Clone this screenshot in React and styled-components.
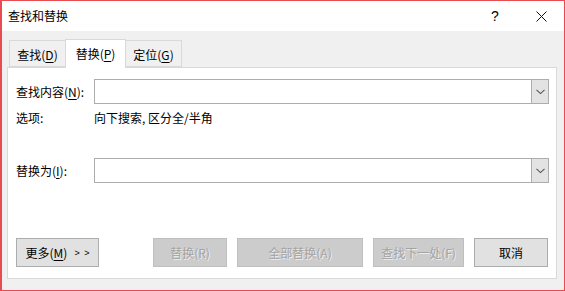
import React from "react";
import styled, { createGlobalStyle } from "styled-components";

const GlobalStyle = createGlobalStyle`
  html, body {
    margin: 0;
    padding: 0;
    background: #f0f0f0;
  }
  * {
    box-sizing: border-box;
  }
`;

const Window = styled.div`
  width: 565px;
  height: 291px;
  display: flex;
  flex-direction: column;
  border: 1px solid #e84c50;
  border-left-width: 2px;
  background: #f0f0f0;
  font-family: "Noto Sans CJK SC", "Microsoft YaHei", sans-serif;
  font-size: 12px;
  color: #000;
`;

const TitleBar = styled.div`
  height: 30px;
  flex: none;
  display: flex;
  align-items: center;
  background: #fff;
  padding-left: 6px;
`;

const Title = styled.div`
  flex: 1;
  font-size: 12px;
  line-height: 16px;
`;

const TitleButton = styled.div`
  width: 46px;
  height: 30px;
  display: flex;
  align-items: center;
  justify-content: center;
  font-family: "Liberation Sans", Arial, sans-serif;
  font-size: 14px;
`;

const Body = styled.div`
  flex: 1;
  display: flex;
  flex-direction: column;
  padding: 9px 7px 0 5px;
`;

const Tabs = styled.div`
  display: flex;
  align-items: flex-end;
  padding-left: 2px;
  height: 28px;
  position: relative;
  z-index: 1;
  margin-bottom: -1px;
`;

const Tab = styled.div`
  height: ${(p) => (p.$active ? "29px" : "27px")};
  width: ${(p) => p.$w}px;
  margin-left: ${(p) => (p.$first ? 0 : "-1px")};
  display: flex;
  align-items: center;
  justify-content: center;
  background: ${(p) => (p.$active ? "#fff" : "#f0f0f0")};
  border: 1px solid #d9d9d9;
  border-bottom: ${(p) => (p.$active ? "none" : "1px solid #d9d9d9")};
  line-height: 16px;
  padding-top: ${(p) => (p.$active ? "0" : "2px")};
  z-index: ${(p) => (p.$active ? 2 : 1)};
  margin-bottom: ${(p) => (p.$active ? "0" : "1px")};
`;

const Key = styled.span`
  text-decoration: underline;
  text-underline-offset: 2px;
`;

const Panel = styled.div`
  height: 212px;
  display: flex;
  flex-direction: column;
  background: #fff;
  border: 1px solid #d9d9d9;
  padding: 11px 7px 11px 8px;
`;

const Row = styled.div`
  display: flex;
  align-items: center;
  height: ${(p) => p.$h || 25}px;
  margin-top: ${(p) => p.$mt || 0}px;
`;

const Label = styled.div`
  width: 78px;
  flex: none;
  line-height: 16px;
`;

const Value = styled.div`
  line-height: 16px;
`;

const Combo = styled.div`
  flex: 1;
  height: 25px;
  display: flex;
  border: 1px solid #adadad;
  background: #fff;
`;

const ComboInput = styled.div`
  flex: 1;
`;

const ComboArrow = styled.div`
  width: 17px;
  display: flex;
  align-items: center;
  justify-content: center;
  background: #e3e3e3;
  border-left: 1px solid #adadad;
`;

const Buttons = styled.div`
  display: flex;
  align-items: center;
  margin-top: auto;
  height: 29px;
`;

const Button = styled.div`
  width: ${(p) => p.$w}px;
  height: 29px;
  margin-left: ${(p) => p.$ml || 0}px;
  display: flex;
  align-items: center;
  justify-content: center;
  line-height: 16px;
  background: ${(p) => (p.$disabled ? "#cccccc" : "#e1e1e1")};
  border: 1px solid ${(p) => (p.$disabled ? "#bfbfbf" : "#adadad")};
  color: ${(p) => (p.$disabled ? "#a3a3a3" : "#000")};
  text-shadow: ${(p) => (p.$disabled ? "1px 1px 0 #ececec" : "none")};
`;

const Chevrons = styled.span`
  margin-left: 7px;
  font-family: "Liberation Sans", Arial, sans-serif;
  font-size: 9px;
  word-spacing: 2px;
`;

function Arrow() {
  return (
    <svg width="9" height="6" viewBox="0 0 9 6">
      <path d="M0.5 0.8 L4.5 4.6 L8.5 0.8" fill="none" stroke="#555" strokeWidth="1.1" />
    </svg>
  );
}

function Close() {
  return (
    <svg width="11" height="11" viewBox="0 0 11 11">
      <path d="M0.5 0.5 L10.5 10.5 M10.5 0.5 L0.5 10.5" stroke="#111" strokeWidth="1" />
    </svg>
  );
}

export default function App() {
  return (
    <>
      <GlobalStyle />
      <Window>
        <TitleBar>
          <Title>查找和替换</Title>
          <TitleButton>?</TitleButton>
          <TitleButton>
            <Close />
          </TitleButton>
        </TitleBar>
        <Body>
          <Tabs>
            <Tab $first $w={57}>
              查找(<Key>D</Key>)
            </Tab>
            <Tab $active $w={61}>
              替换(<Key>P</Key>)
            </Tab>
            <Tab $w={57}>
              定位(<Key>G</Key>)
            </Tab>
          </Tabs>
          <Panel>
            <Row>
              <Label>
                查找内容(<Key>N</Key>):
              </Label>
              <Combo>
                <ComboInput />
                <ComboArrow>
                  <Arrow />
                </ComboArrow>
              </Combo>
            </Row>
            <Row $h={28}>
              <Label>选项:</Label>
              <Value>向下搜索, 区分全/半角</Value>
            </Row>
            <Row $mt={26}>
              <Label>
                替换为(<Key>I</Key>):
              </Label>
              <Combo>
                <ComboInput />
                <ComboArrow>
                  <Arrow />
                </ComboArrow>
              </Combo>
            </Row>
            <Buttons>
              <Button $w={83}>
                更多(<Key>M</Key>)<Chevrons>&gt; &gt;</Chevrons>
              </Button>
              <Button $w={74} $ml={54} $disabled>
                替换(R)
              </Button>
              <Button $w={126} $ml={10} $disabled>
                全部替换(A)
              </Button>
              <Button $w={91} $ml={10} $disabled>
                查找下一处(F)
              </Button>
              <Button $w={74} $ml={10}>
                取消
              </Button>
            </Buttons>
          </Panel>
        </Body>
      </Window>
    </>
  );
}
